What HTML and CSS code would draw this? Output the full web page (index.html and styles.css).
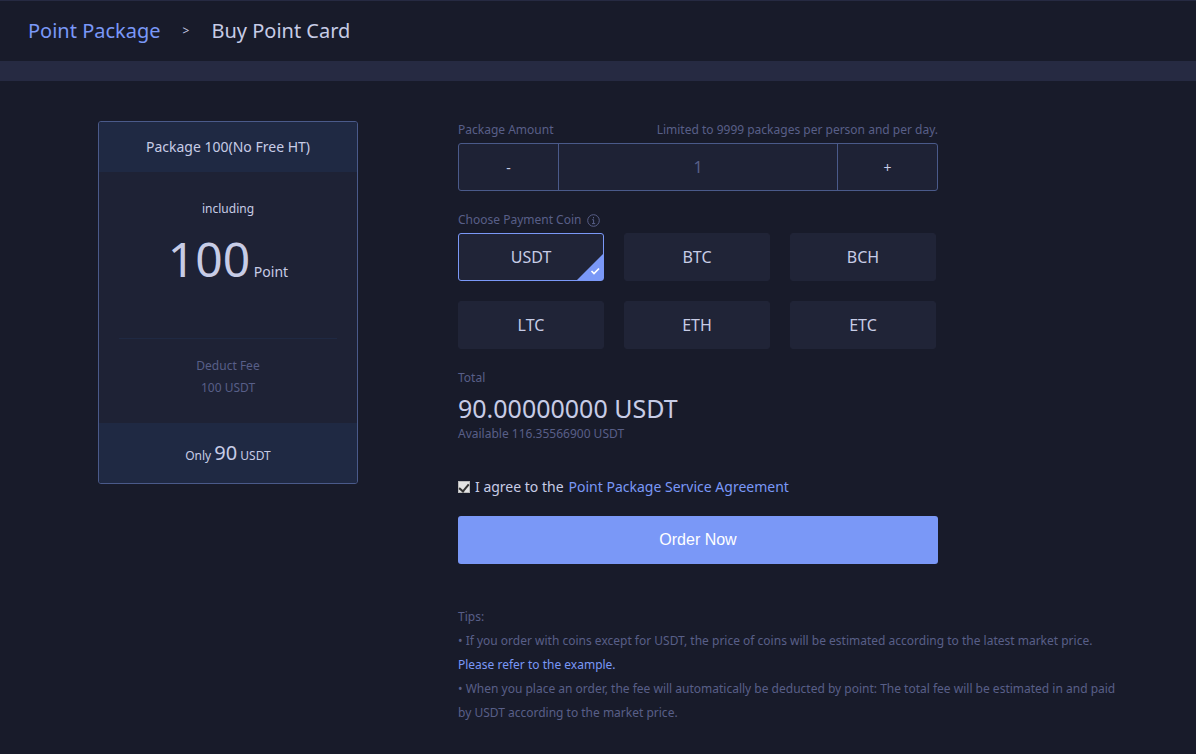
FILE: index.html
```html
<!DOCTYPE html>
<html lang="en">
  <head>
    <meta charset="UTF-8">
    <title>Buy Point Card</title>
    <link rel="stylesheet" href="styles.css">
  </head>
  <body>
    <nav class="crumbs">
      <a href="#">Point Package</a>
      <span class="sep">&gt;</span>
      <span>Buy Point Card</span>
    </nav>
    <main class="content">
      <section class="card">
        <h2 class="card-title">Package 100(No Free HT)</h2>
        <div class="card-body">
          <p class="including">including</p>
          <p class="points"><strong>100</strong> Point</p>
          <p class="deduct">Deduct Fee<br>100 USDT</p>
        </div>
        <p class="card-price">Only <strong>90</strong> USDT</p>
      </section>
      <div class="buy">
        <form class="order">
          <div class="label-row">
            <label for="amount">Package Amount</label>
            <span>Limited to 9999 packages per person and per day.</span>
          </div>
          <div class="amount">
            <button type="button">-</button>
            <input type="text" id="amount" value="1">
            <button type="button">+</button>
          </div>
          <div class="label-row" id="coin-label">
            <span class="with-icon">Choose Payment Coin
              <svg width="13" height="13" viewBox="0 0 13 13" fill="none" stroke="currentColor">
                <circle cx="6.5" cy="6.5" r="5.8"/>
                <path d="M6.5 3v1.4M5.2 5.7h1.4v4M5 9.6h3.2"/>
              </svg>
            </span>
          </div>
          <div class="coins" role="radiogroup" aria-labelledby="coin-label">
            <label class="coin active"><input type="radio" name="coin" checked>USDT
              <svg class="corner" width="26" height="26" viewBox="0 0 26 26">
                <path d="M26 0v26H0z" fill="#7a98f7"/>
                <path d="M14.5 17l2.5 2.5 5-5" fill="none" stroke="#fff" stroke-width="1.7"/>
              </svg>
            </label>
            <label class="coin"><input type="radio" name="coin">BTC</label>
            <label class="coin"><input type="radio" name="coin">BCH</label>
            <label class="coin"><input type="radio" name="coin">LTC</label>
            <label class="coin"><input type="radio" name="coin">ETH</label>
            <label class="coin"><input type="radio" name="coin">ETC</label>
          </div>
          <div class="label-row">Total</div>
          <p class="total">90.00000000 USDT</p>
          <p class="available">Available 116.35566900 USDT</p>
          <div class="agree">
            <input type="checkbox" id="agree" checked>
            <label for="agree">I agree to the</label>
            <a href="#">Point Package Service Agreement</a>
          </div>
          <button type="submit" class="submit">Order Now</button>
        </form>
        <div class="tips">
          <p>Tips:</p>
          <p>• If you order with coins except for USDT, the price of coins will be estimated according to the latest market price.</p>
          <p><a href="#">Please refer to the example.</a></p>
          <p>• When you place an order, the fee will automatically be deducted by point: The total fee will be estimated in and paid by USDT according to the market price.</p>
        </div>
      </div>
    </main>
  </body>
</html>
```
FILE: styles.css
```css
*
{
  box-sizing: border-box;
}
body
{
  margin: 0;
  background: #181b2a;
  color: #c7cce6;
  font-family: "Noto Sans", "Open Sans", sans-serif;
  font-size: 14px;
}
p,
h2
{
  margin: 0;
  font-weight: normal;
}
strong
{
  font-weight: normal;
}
a
{
  color: #7a98f7;
  text-decoration: none;
}
button,
input
{
  font-family: inherit;
  color: inherit;
  margin: 0;
}

.crumbs
{
  display: flex;
  align-items: center;
  gap: 22px;
  padding: 0 28px;
  font-size: 20px;
  line-height: 60px;
  border-top: 1px solid #262a42;
  border-bottom: 20px solid #262a42;
}
.sep
{
  font-size: 12px;
}

.content
{
  display: flex;
  align-items: flex-start;
  gap: 100px;
  padding: 40px 70px 28px 98px;
}

/* package card */
.card
{
  flex: 0 0 260px;
  border: 1px solid #4a5a8a;
  border-radius: 3px;
  background: #1e2235;
  text-align: center;
  overflow: hidden;
}
.card-title
{
  font-size: 14px;
  line-height: 50px;
  background: #1f2943;
}
.card-body
{
  padding: 27px 20px 24px;
}
.including
{
  font-size: 12px;
  line-height: 20px;
}
.points
{
  line-height: 80px;
  padding-bottom: 26px;
  border-bottom: 1px solid #1f2943;
}
.points strong
{
  font-size: 48px;
}
.deduct
{
  padding-top: 16px;
  font-size: 12px;
  line-height: 22px;
  color: #585f88;
}
.card-price
{
  padding-top: 6px;
  font-size: 12px;
  line-height: 54px;
  background: #1f2943;
}
.card-price strong
{
  font-size: 20px;
  line-height: 20px;
}

/* order form */
.buy
{
  flex: 1;
}
.order
{
  max-width: 480px;
}
.label-row
{
  display: flex;
  justify-content: space-between;
  margin-bottom: 4px;
  font-size: 12px;
  line-height: 18px;
  color: #585f88;
}
.with-icon
{
  display: flex;
  align-items: center;
  gap: 6px;
}
.amount
{
  display: flex;
  height: 48px;
  margin-bottom: 20px;
  border: 1px solid #4a5a8a;
  border-radius: 3px;
  background: #1e2235;
}
.amount button
{
  flex: 0 0 99px;
  padding: 0;
  border: 0;
  background: none;
  font-size: 14px;
}
.amount input
{
  flex: 1;
  min-width: 0;
  padding: 0;
  border: solid #4a5a8a;
  border-width: 0 1px;
  background: none;
  color: #585f88;
  font-size: 16px;
  text-align: center;
}
.coins
{
  display: grid;
  grid-template-columns: repeat(3, 146px);
  gap: 20px;
  margin-bottom: 20px;
}
.coin
{
  position: relative;
  border: 1px solid #202437;
  border-radius: 3px;
  background: #202437;
  font-size: 16px;
  line-height: 46px;
  text-align: center;
}
.coin.active
{
  border-color: #7a98f7;
}
.coin input
{
  position: absolute;
  opacity: 0;
}
.corner
{
  position: absolute;
  right: 0;
  bottom: 0;
}
.total
{
  font-size: 25px;
  line-height: 34px;
}
.available
{
  font-size: 12px;
  line-height: 18px;
  color: #585f88;
}
.agree
{
  display: flex;
  align-items: center;
  gap: 5px;
  margin: 33px 0 18px;
  line-height: 22px;
}
.agree input
{
  appearance: none;
  display: flex;
  justify-content: center;
  width: 12px;
  height: 12px;
  border: 1px solid #bbb;
  background: #e4e4e4;
}
.agree input:checked::after
{
  content: "";
  width: 4px;
  height: 8px;
  border: solid #333;
  border-width: 0 2px 2px 0;
  transform: rotate(40deg);
}
.submit
{
  width: 100%;
  height: 48px;
  border: 0;
  border-radius: 3px;
  background: #7a98f7;
  color: #fff;
  font-family: "Liberation Sans", Arial, sans-serif;
  font-size: 16px;
}
.tips
{
  margin-top: 41px;
  font-size: 12px;
  line-height: 24px;
  color: #585f88;
}
```
